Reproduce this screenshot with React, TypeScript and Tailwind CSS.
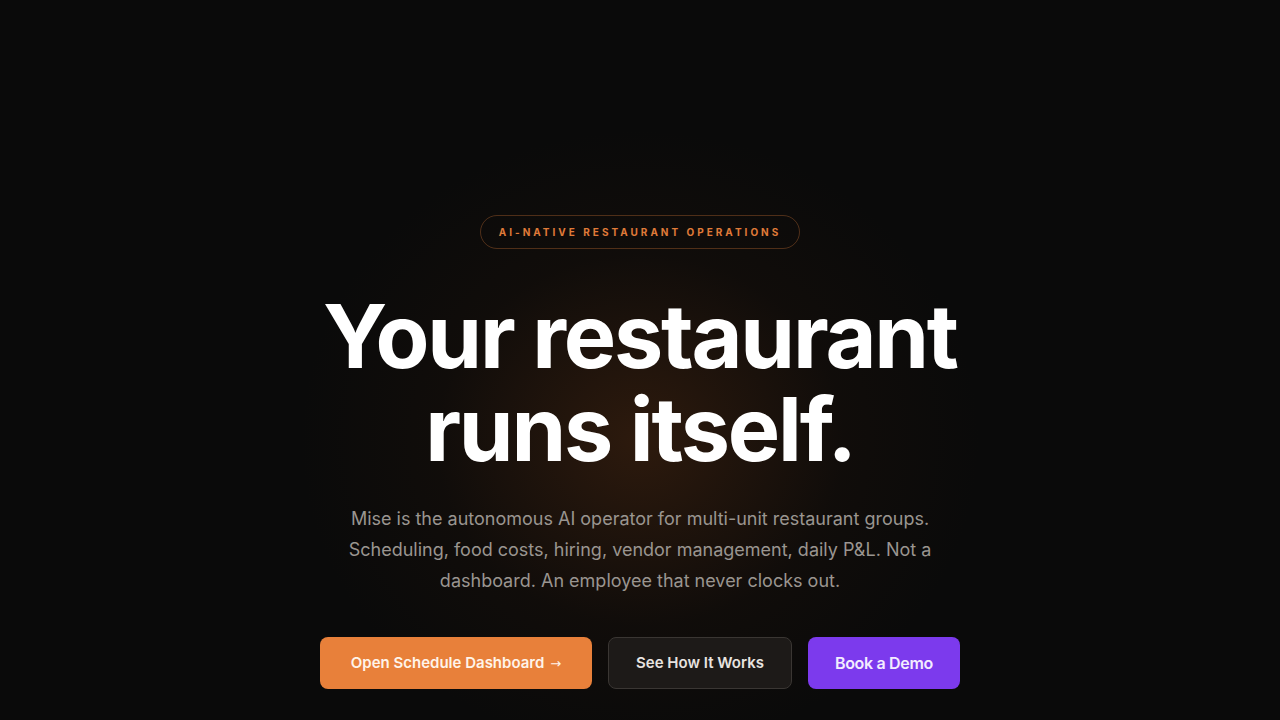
import React from 'react';

export default function App() {
  return (
    <div
      className="relative min-h-screen w-full overflow-hidden bg-[#0a0a0a] text-white"
      style={{ fontFamily: 'Inter, "Noto Sans", sans-serif' }}
    >
      {/* warm glow */}
      <div className="pointer-events-none absolute left-1/2 top-[440px] h-[620px] w-[680px] -translate-x-1/2 -translate-y-1/2 rounded-full bg-[radial-gradient(closest-side,rgba(120,60,20,0.32),rgba(60,30,10,0.12)_60%,transparent)]" />

      <div className="relative flex flex-col items-center pt-[215px]">
        {/* Badge */}
        <div className="flex h-[34px] w-[320px] items-center justify-center rounded-full border border-[#e8803a]/30">
          <span className="text-[10px] font-bold uppercase tracking-[0.3em] text-[#e07b39]">
            AI-Native Restaurant Operations
          </span>
        </div>

        {/* Headline */}
        <h1 className="mt-[41px] text-center text-[88px] font-bold leading-[93px] tracking-[-0.025em] text-white">
          Your restaurant
          <br />
          runs itself.
        </h1>

        {/* Subtext */}
        <p className="mt-[27px] w-[600px] text-center text-[18px] leading-[31px] text-[#9a9590]">
          Mise is the autonomous AI operator for multi-unit restaurant groups. Scheduling, food costs, hiring, vendor
          management, daily P&amp;L. Not a dashboard. An employee that never clocks out.
        </p>

        {/* Actions */}
        <div className="mt-[41px] flex gap-4">
          <button className="h-[52px] w-[272px] rounded-lg bg-[#e8803a] text-[15px] font-semibold text-[#fff4ea]">
            Open Schedule Dashboard
            <span className="ml-[6px] font-normal" style={{ fontFamily: '"DejaVu Sans", sans-serif', fontSize: 13 }}>
              →
            </span>
          </button>
          <button className="h-[52px] w-[184px] rounded-lg border border-[#3a3633] bg-[#1d1a18] text-[15px] font-semibold text-[#e8e4e0]">
            See How It Works
          </button>
          <button className="h-[52px] w-[152px] rounded-lg bg-[#7c3aed] text-[16px] font-semibold tracking-[-0.02em] text-[#f3ecff]">
            Book a Demo
          </button>
        </div>
      </div>
    </div>
  );
}
